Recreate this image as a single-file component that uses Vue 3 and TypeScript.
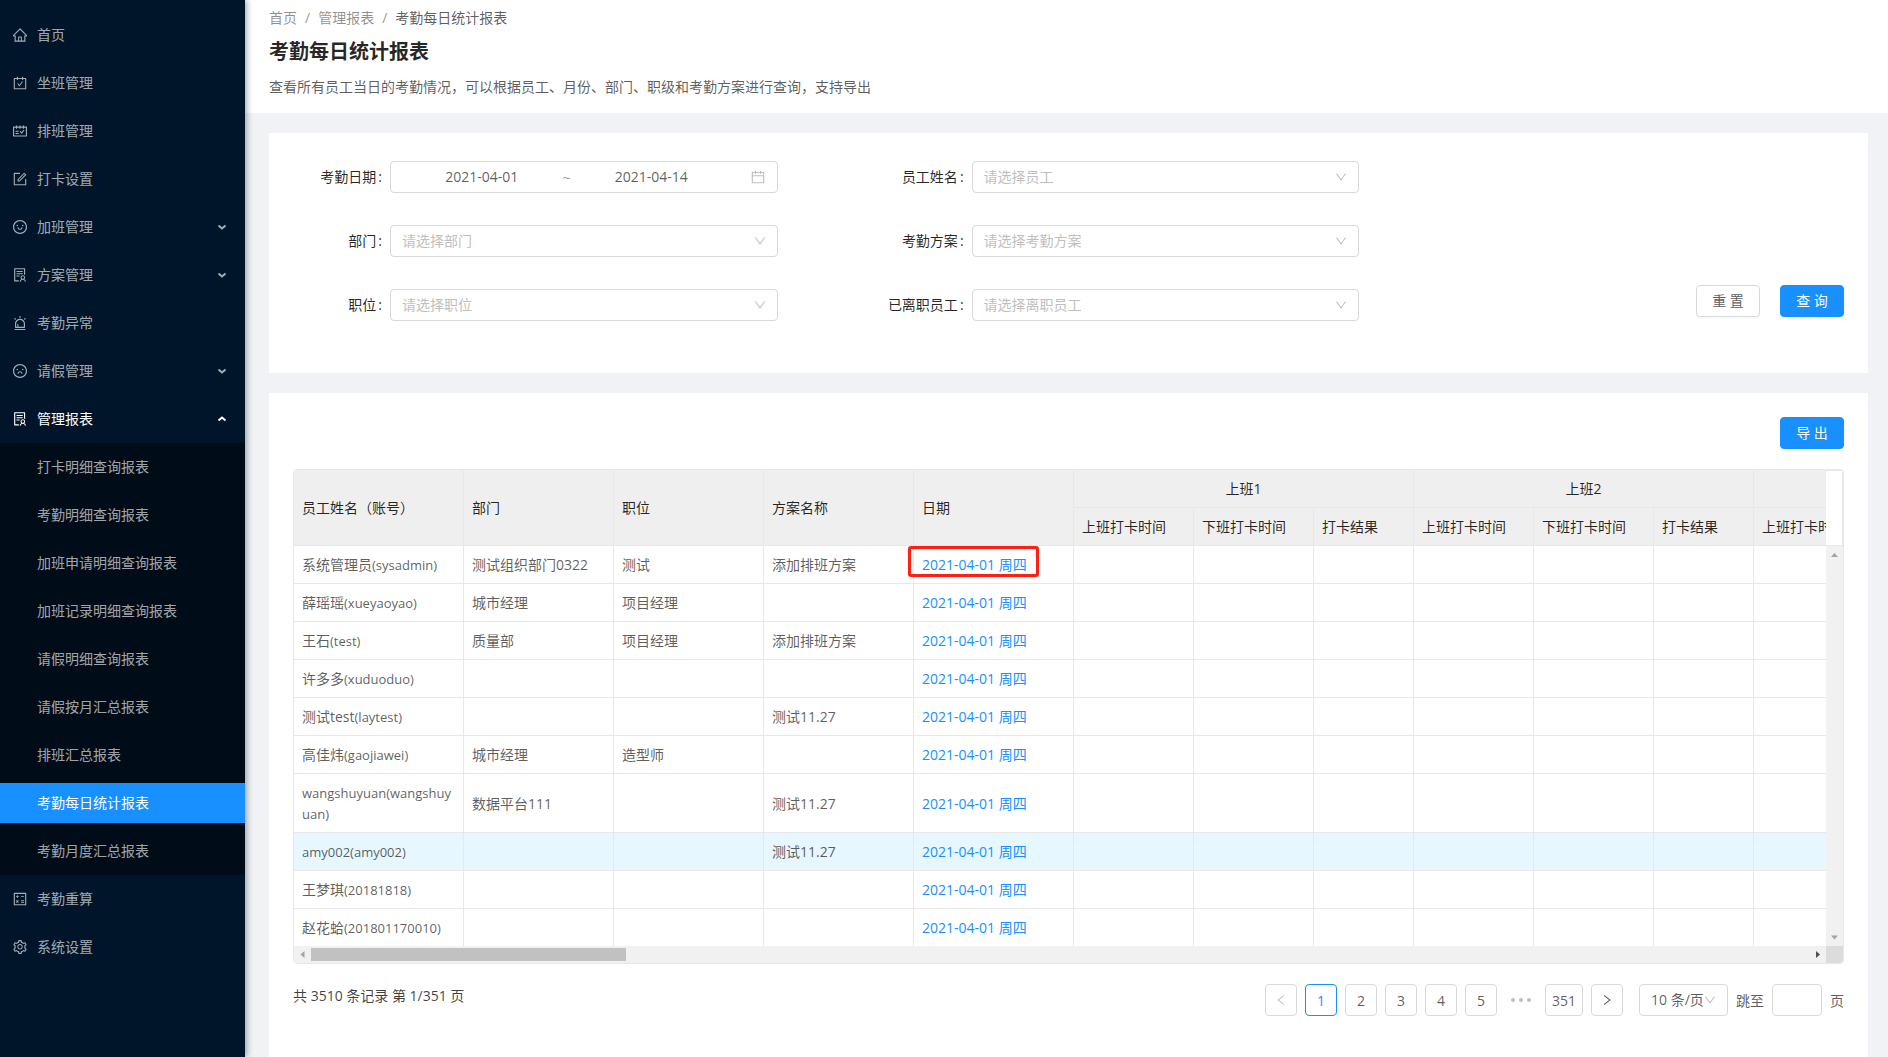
<script setup lang="ts">
import { ref } from 'vue'

interface MenuItem {
  label: string
  icon: string
  expandable?: boolean
  open?: boolean
  children?: string[]
}

interface Row {
  name: string
  account: string
  dept?: string
  post?: string
  plan?: string
  marked?: boolean
  hovered?: boolean
}

const icons: Record<string, string> = {
  home: 'M946.5 505L560.1 118.8l-25.9-25.9a31.5 31.5 0 0 0-44.4 0L77.5 505a63.9 63.9 0 0 0-18.8 46c.4 35.2 29.7 63.3 64.9 63.3h42.5V940h691.8V614.3h43.4c17.1 0 33.2-6.7 45.3-18.8a63.6 63.6 0 0 0 18.7-45.3c0-17-6.7-33.1-18.8-45.2zM568 868H456V664h112v204zm217.9-325.7V868H632V640c0-22.1-17.9-40-40-40H432c-22.1 0-40 17.9-40 40v228H238.1V542.3h-96l370-369.7 23.1 23.1L882 542.3h-96.1z',
  carryOut: 'M880 184H712v-64c0-4.4-3.6-8-8-8h-56c-4.4 0-8 3.6-8 8v64H384v-64c0-4.4-3.6-8-8-8h-56c-4.4 0-8 3.6-8 8v64H144c-17.7 0-32 14.3-32 32v664c0 17.7 14.3 32 32 32h736c17.7 0 32-14.3 32-32V216c0-17.7-14.3-32-32-32zm-40 656H184V256h128v48c0 4.4 3.6 8 8 8h56c4.4 0 8-3.6 8-8v-48h256v48c0 4.4 3.6 8 8 8h56c4.4 0 8-3.6 8-8v-48h128v584zM688 420h-55.2c-5.1 0-10 2.5-13 6.6L468.9 634.4l-64.7-89c-3-4.1-7.8-6.6-13-6.6H336c-6.5 0-10.3 7.4-6.5 12.7l126.4 174a16.1 16.1 0 0 0 26 0l212.6-292.7c3.8-5.4 0-12.8-6.5-12.8z',
  schedule: 'M928 224H768v-56c0-4.4-3.6-8-8-8h-56c-4.4 0-8 3.6-8 8v56H548v-56c0-4.4-3.6-8-8-8h-56c-4.4 0-8 3.6-8 8v56H328v-56c0-4.4-3.6-8-8-8h-56c-4.4 0-8 3.6-8 8v56H96c-17.7 0-32 14.3-32 32v576c0 17.7 14.3 32 32 32h832c17.7 0 32-14.3 32-32V256c0-17.7-14.3-32-32-32zm-40 568H136V296h120v56c0 4.4 3.6 8 8 8h56c4.4 0 8-3.6 8-8v-56h148v56c0 4.4 3.6 8 8 8h56c4.4 0 8-3.6 8-8v-56h148v56c0 4.4 3.6 8 8 8h56c4.4 0 8-3.6 8-8v-56h120v496zM416 496H232c-4.4 0-8 3.6-8 8v48c0 4.4 3.6 8 8 8h184c4.4 0 8-3.6 8-8v-48c0-4.4-3.6-8-8-8zm0 136H232c-4.4 0-8 3.6-8 8v48c0 4.4 3.6 8 8 8h184c4.4 0 8-3.6 8-8v-48c0-4.4-3.6-8-8-8zm308.2-177.4L620.6 598.3l-52.8-73.1c-3-4.2-7.8-6.6-12.9-6.6H500c-6.5 0-10.3 7.4-6.5 12.7l114.1 158.2a15.9 15.9 0 0 0 25.8 0l165-228.7c3.8-5.3 0-12.7-6.5-12.7H737c-5-.1-9.8 2.4-12.8 6.5z',
  form: 'M904 512h-56c-4.4 0-8 3.6-8 8v320H184V184h320c4.4 0 8-3.6 8-8v-56c0-4.4-3.6-8-8-8H144c-17.7 0-32 14.3-32 32v736c0 17.7 14.3 32 32 32h736c17.7 0 32-14.3 32-32V520c0-4.4-3.6-8-8-8zM355.9 534.9L354 653.8c-.1 8.9 7.1 16.2 16 16.2h.4l118-2.9c2-.1 4-.9 5.4-2.3l415.9-415c3.1-3.1 3.1-8.2 0-11.3L785.4 114.3c-1.6-1.6-3.6-2.3-5.7-2.3s-4.1.8-5.7 2.3l-415.8 415a8.3 8.3 0 0 0-2.3 5.6zm63.5 23.6L779.7 199l45.2 45.1-360.5 359.7-45.7 1.1.7-46.4z',
  smile: 'M288 421a48 48 0 1 0 96 0 48 48 0 1 0-96 0zm352 0a48 48 0 1 0 96 0 48 48 0 1 0-96 0zM512 64C264.6 64 64 264.6 64 512s200.6 448 448 448 448-200.6 448-448S759.4 64 512 64zm263 711c-34.2 34.2-74 61-118.3 79.8C611 874.2 562.3 884 512 884c-50.3 0-99-9.8-144.8-29.2A370.4 370.4 0 0 1 248.9 775c-34.2-34.2-61-74-79.8-118.3C149.8 611 140 562.3 140 512s9.8-99 29.2-144.8A370.4 370.4 0 0 1 249 248.9c34.2-34.2 74-61 118.3-79.8C413 149.8 461.7 140 512 140c50.3 0 99 9.8 144.8 29.2A370.4 370.4 0 0 1 775.1 249c34.2 34.2 61 74 79.8 118.3C874.2 413 884 461.7 884 512s-9.8 99-29.2 144.8A368.89 368.89 0 0 1 775 775zM664 533h-48.1c-4.2 0-7.8 3.2-8.1 7.4C604 589.9 562.5 629 512 629s-92.1-39.1-95.8-88.6c-.3-4.2-3.9-7.4-8.1-7.4H360a8 8 0 0 0-8 8.4c4.4 84.3 74.5 151.6 160 151.6s155.6-67.3 160-151.6a8 8 0 0 0-8-8.4z',
  frown: 'M288 421a48 48 0 1 0 96 0 48 48 0 1 0-96 0zm352 0a48 48 0 1 0 96 0 48 48 0 1 0-96 0zM512 64C264.6 64 64 264.6 64 512s200.6 448 448 448 448-200.6 448-448S759.4 64 512 64zm263 711c-34.2 34.2-74 61-118.3 79.8C611 874.2 562.3 884 512 884c-50.3 0-99-9.8-144.8-29.2A370.4 370.4 0 0 1 248.9 775c-34.2-34.2-61-74-79.8-118.3C149.8 611 140 562.3 140 512s9.8-99 29.2-144.8A370.4 370.4 0 0 1 249 248.9c34.2-34.2 74-61 118.3-79.8C413 149.8 461.7 140 512 140c50.3 0 99 9.8 144.8 29.2A370.4 370.4 0 0 1 775.1 249c34.2 34.2 61 74 79.8 118.3C874.2 413 884 461.7 884 512s-9.8 99-29.2 144.8A368.89 368.89 0 0 1 775 775zM512 533c-85.5 0-155.6 67.3-160 151.6a8 8 0 0 0 8 8.4h48.1c4.2 0 7.8-3.2 8.1-7.4C420 636.1 461.5 597 512 597s92.1 39.1 95.8 88.6c.3 4.2 3.9 7.4 8.1 7.4H664a8 8 0 0 0 8-8.4C667.6 600.3 597.5 533 512 533z',
  solution: 'M688 264c0-4.4-3.6-8-8-8H296c-4.4 0-8 3.6-8 8v48c0 4.4 3.6 8 8 8h384c4.4 0 8-3.6 8-8v-48zm-8 136H296c-4.4 0-8 3.6-8 8v48c0 4.4 3.6 8 8 8h384c4.4 0 8-3.6 8-8v-48c0-4.4-3.6-8-8-8zM480 544H296c-4.4 0-8 3.6-8 8v48c0 4.4 3.6 8 8 8h184c4.4 0 8-3.6 8-8v-48c0-4.4-3.6-8-8-8zm-48 308H208V148h560v344c0 4.4 3.6 8 8 8h56c4.4 0 8-3.6 8-8V108c0-17.7-14.3-32-32-32H168c-17.7 0-32 14.3-32 32v784c0 17.7 14.3 32 32 32h264c4.4 0 8-3.6 8-8v-56c0-4.4-3.6-8-8-8zm356.8-74.4c29-26.3 47.2-64.3 47.2-106.6 0-79.5-64.5-144-144-144s-144 64.5-144 144c0 42.3 18.2 80.3 47.2 106.6-57 32.5-96.2 92.7-99.2 162.1-.2 4.5 3.5 8.3 8 8.3h48.1c4.2 0 7.7-3.3 8-7.6C564 871.2 621.7 816 692 816s128 55.2 131.9 124.4c.2 4.2 3.7 7.6 8 7.6H880c4.6 0 8.2-3.8 8-8.3-2.9-69.5-42.2-129.6-99.2-162.1zM692 591c44.2 0 80 35.8 80 80s-35.8 80-80 80-80-35.8-80-80 35.8-80 80-80z',
  alert: 'M193 796c0 17.7 14.3 32 32 32h574c17.7 0 32-14.3 32-32V563c0-176.2-142.8-319-319-319S193 386.8 193 563v233zm72-233c0-136.4 110.6-247 247-247s247 110.6 247 247v193H404V585c0-5.5-4.5-10-10-10h-44c-5.5 0-10 4.5-10 10v171h-75V563zm-48.1-252.5l39.6-39.6c3.1-3.1 3.1-8.2 0-11.3l-67.9-67.9a8.03 8.03 0 0 0-11.3 0l-39.6 39.6a8.03 8.03 0 0 0 0 11.3l67.9 67.9c3.1 3.1 8.1 3.1 11.3 0zm669.6-79.2l-39.6-39.6a8.03 8.03 0 0 0-11.3 0l-67.9 67.9a8.03 8.03 0 0 0 0 11.3l39.6 39.6c3.1 3.1 8.2 3.1 11.3 0l67.9-67.9c3.1-3.2 3.1-8.2 0-11.3zM832 892H192c-17.7 0-32 14.3-32 32v24c0 4.4 3.6 8 8 8h688c4.4 0 8-3.6 8-8v-24c0-17.7-14.3-32-32-32zM484 180h56c4.4 0 8-3.6 8-8V76c0-4.4-3.6-8-8-8h-56c-4.4 0-8 3.6-8 8v96c0 4.4 3.6 8 8 8z',
  calculator: 'M880 112H144c-17.7 0-32 14.3-32 32v736c0 17.7 14.3 32 32 32h736c17.7 0 32-14.3 32-32V144c0-17.7-14.3-32-32-32zm-40 728H184V184h656v656zM251 331h64v-64h56v64h64v56h-64v64h-56v-64h-64zM576 331h192v56H576zM576 592h192v56H576zM576 696h192v56H576zM254 622l40-40 49 49 49-49 40 40-49 49 49 49-40 40-49-49-49 49-40-40 49-49z',
  setting: 'M924.8 625.7l-65.5-56c3.1-19 4.7-38.4 4.7-57.8s-1.6-38.8-4.7-57.8l65.5-56a32.03 32.03 0 0 0 9.3-35.2l-.9-2.6a443.74 443.74 0 0 0-79.7-137.9l-1.8-2.1a32.12 32.12 0 0 0-35.1-9.5l-81.3 28.9c-30-24.6-63.5-44-99.7-57.6l-15.7-85a32.05 32.05 0 0 0-25.8-25.7l-2.7-.5c-52.1-9.4-106.9-9.4-159 0l-2.7.5a32.05 32.05 0 0 0-25.8 25.7l-15.8 85.4a351.86 351.86 0 0 0-99 57.4l-81.9-29.1a32 32 0 0 0-35.1 9.5l-1.8 2.1a446.02 446.02 0 0 0-79.7 137.9l-.9 2.6c-4.5 12.5-.8 26.5 9.3 35.2l66.3 56.6c-3.1 18.8-4.6 38-4.6 57.1 0 19.2 1.5 38.4 4.6 57.1L99 625.5a32.03 32.03 0 0 0-9.3 35.2l.9 2.6c18.1 50.4 44.9 96.9 79.7 137.9l1.8 2.1a32.12 32.12 0 0 0 35.1 9.5l81.9-29.1c29.8 24.5 63.1 43.9 99 57.4l15.8 85.4a32.05 32.05 0 0 0 25.8 25.7l2.7.5a449.4 449.4 0 0 0 159 0l2.7-.5a32.05 32.05 0 0 0 25.8-25.7l15.7-85a350 350 0 0 0 99.7-57.6l81.3 28.9a32 32 0 0 0 35.1-9.5l1.8-2.1c34.8-41.1 61.6-87.5 79.7-137.9l.9-2.6c4.5-12.3.8-26.3-9.3-35zM788.3 465.9c2.5 15.1 3.8 30.6 3.8 46.1s-1.3 31-3.8 46.1l-6.6 40.1 74.7 63.9a370.03 370.03 0 0 1-42.6 73.6L721 702.8l-31.4 25.8c-23.9 19.6-50.5 35-79.3 45.8l-38.1 14.3-17.9 97a377.5 377.5 0 0 1-85 0l-17.9-97.2-37.8-14.5c-28.5-10.8-55-26.2-78.7-45.7l-31.4-25.9-93.4 33.2c-17-22.9-31.2-47.6-42.6-73.6l75.5-64.5-6.5-40c-2.4-14.9-3.7-30.3-3.7-45.5 0-15.3 1.2-30.6 3.7-45.5l6.5-40-75.5-64.5c11.3-26.1 25.6-50.7 42.6-73.6l93.4 33.2 31.4-25.9c23.7-19.5 50.2-34.9 78.7-45.7l37.9-14.3 17.9-97.2c28.1-3.2 56.8-3.2 85 0l17.9 97 38.1 14.3c28.7 10.8 55.4 26.2 79.3 45.8l31.4 25.8 92.8-32.9c17 22.9 31.2 47.6 42.6 73.6L781.8 426l6.5 39.9zM512 326c-97.2 0-176 78.8-176 176s78.8 176 176 176 176-78.8 176-176-78.8-176-176-176zm79.2 255.2A111.6 111.6 0 0 1 512 614c-29.9 0-58-11.7-79.2-32.8A111.6 111.6 0 0 1 400 502c0-29.9 11.7-58 32.8-79.2C454 401.6 482.1 390 512 390c29.9 0 58 11.6 79.2 32.8A111.6 111.6 0 0 1 624 502c0 29.9-11.7 58-32.8 79.2z',
  calendar: 'M880 184H712v-64c0-4.4-3.6-8-8-8h-56c-4.4 0-8 3.6-8 8v64H384v-64c0-4.4-3.6-8-8-8h-56c-4.4 0-8 3.6-8 8v64H144c-17.7 0-32 14.3-32 32v664c0 17.7 14.3 32 32 32h736c17.7 0 32-14.3 32-32V216c0-17.7-14.3-32-32-32zm-40 656H184V460h656v380zM184 392V256h128v48c0 4.4 3.6 8 8 8h56c4.4 0 8-3.6 8-8v-48h256v48c0 4.4 3.6 8 8 8h56c4.4 0 8-3.6 8-8v-48h128v136H184z',
  down: 'M884 256h-75c-5.1 0-9.9 2.5-12.9 6.6L512 654.2 227.9 262.6c-3-4.1-7.8-6.6-12.9-6.6h-75c-6.5 0-10.3 7.4-6.5 12.7l352.6 486.1c12.8 17.6 39 17.6 51.7 0l352.6-486.1c3.9-5.3.1-12.7-6.4-12.7z',
  left: 'M724 218.3V141c0-6.7-7.7-10.4-12.9-6.3L260.3 486.8a31.86 31.86 0 0 0 0 50.3l450.8 352.1c5.3 4.1 12.9.4 12.9-6.3v-77.3c0-4.9-2.3-9.6-6.1-12.6l-360-281 360-281.1c3.8-3 6.1-7.7 6.1-12.6z',
  right: 'M765.7 486.8L314.9 134.7A7.97 7.97 0 0 0 302 141v77.3c0 4.9 2.3 9.6 6.1 12.6l360 281.1-360 281.1c-3.9 3-6.1 7.7-6.1 12.6V883c0 6.7 7.7 10.4 12.9 6.3l450.8-352.1a31.96 31.96 0 0 0 0-50.4z',
}

const menu: MenuItem[] = [
  { label: '首页', icon: 'home' },
  { label: '坐班管理', icon: 'carryOut' },
  { label: '排班管理', icon: 'schedule' },
  { label: '打卡设置', icon: 'form' },
  { label: '加班管理', icon: 'smile', expandable: true },
  { label: '方案管理', icon: 'solution', expandable: true },
  { label: '考勤异常', icon: 'alert' },
  { label: '请假管理', icon: 'frown', expandable: true },
  {
    label: '管理报表',
    icon: 'solution',
    expandable: true,
    open: true,
    children: [
      '打卡明细查询报表',
      '考勤明细查询报表',
      '加班申请明细查询报表',
      '加班记录明细查询报表',
      '请假明细查询报表',
      '请假按月汇总报表',
      '排班汇总报表',
      '考勤每日统计报表',
      '考勤月度汇总报表',
    ],
  },
  { label: '考勤重算', icon: 'calculator' },
  { label: '系统设置', icon: 'setting' },
]
const current = '考勤每日统计报表'

const startDate = ref('2021-04-01')
const endDate = ref('2021-04-14')
const filters = [
  { id: 'employee', label: '员工姓名', hint: '请选择员工' },
  { id: 'dept', label: '部门', hint: '请选择部门' },
  { id: 'plan', label: '考勤方案', hint: '请选择考勤方案' },
  { id: 'post', label: '职位', hint: '请选择职位' },
  { id: 'resigned', label: '已离职员工', hint: '请选择离职员工' },
]

const columnWidths = [170, 150, 150, 150, 160, 120, 120, 100, 120, 120, 100, 120]
const fixedHeads = ['员工姓名（账号）', '部门', '职位', '方案名称', '日期']
const shiftHeads = [
  '上班打卡时间', '下班打卡时间', '打卡结果',
  '上班打卡时间', '下班打卡时间', '打卡结果',
  '上班打卡时间',
]

const day = '2021-04-01 周四'
const rows: Row[] = [
  { name: '系统管理员', account: 'sysadmin', dept: '测试组织部门0322', post: '测试', plan: '添加排班方案', marked: true },
  { name: '薛瑶瑶', account: 'xueyaoyao', dept: '城市经理', post: '项目经理' },
  { name: '王石', account: 'test', dept: '质量部', post: '项目经理', plan: '添加排班方案' },
  { name: '许多多', account: 'xuduoduo' },
  { name: '测试test', account: 'laytest', plan: '测试11.27' },
  { name: '高佳炜', account: 'gaojiawei', dept: '城市经理', post: '造型师' },
  { name: '', account: 'wangshuyuan', dept: '数据平台111', plan: '测试11.27' },
  { name: '', account: 'amy002', plan: '测试11.27', hovered: true },
  { name: '王梦琪', account: '20181818' },
  { name: '赵花蛤', account: '201801170010' },
]
const latinPart = (row: Row): string => (row.name ? `(${row.account})` : `${row.account}(${row.account})`)

const pages = [1, 2, 3, 4, 5]
const page = ref(1)
const jump = ref('')
</script>

<template>
  <div class="layout">
    <nav class="sider">
      <ul class="menu">
        <li v-for="item in menu" :key="item.label">
          <div class="slot">
            <button v-if="item.expandable" type="button" class="entry" :class="{ open: item.open }">
              <svg class="icon" viewBox="64 64 896 896"><path :d="icons[item.icon]" /></svg>
              <span class="entry-label">{{ item.label }}</span>
              <svg class="arrow" viewBox="0 0 10 8">
                <path :d="item.open ? 'M1.5 5.5L5 2.5L8.5 5.5' : 'M1.5 2.5L5 5.5L8.5 2.5'" />
              </svg>
            </button>
            <a v-else href="#" class="entry">
              <svg class="icon" viewBox="64 64 896 896"><path :d="icons[item.icon]" /></svg>
              <span class="entry-label">{{ item.label }}</span>
            </a>
          </div>
          <ul v-if="item.children" class="submenu">
            <li v-for="child in item.children" :key="child" class="slot">
              <a href="#" class="entry sub" :class="{ selected: child === current }">{{ child }}</a>
            </li>
          </ul>
        </li>
      </ul>
    </nav>

    <main class="main">
      <header class="page-head">
        <div class="crumbs">
          <a href="#">首页</a><span class="sep">/</span><a href="#">管理报表</a><span class="sep">/</span><span class="here">考勤每日统计报表</span>
        </div>
        <h1>考勤每日统计报表</h1>
        <p>查看所有员工当日的考勤情况，可以根据员工、月份、部门、职级和考勤方案进行查询，支持导出</p>
      </header>

      <div class="content">
        <form class="card filters" @submit.prevent>
          <div class="fields">
            <div class="field">
              <label for="start">考勤日期</label>
              <div class="control range">
                <input id="start" v-model="startDate" type="text" />
                <span class="tilde">~</span>
                <input v-model="endDate" type="text" aria-label="结束日期" />
                <svg class="icon cal" viewBox="64 64 896 896"><path :d="icons.calendar" /></svg>
              </div>
            </div>
            <div v-for="f in filters" :key="f.id" class="field">
              <label :for="f.id">{{ f.label }}</label>
              <div class="control">
                <select :id="f.id">
                  <option value="">{{ f.hint }}</option>
                </select>
                <svg class="caret" viewBox="64 64 896 896"><path :d="icons.down" /></svg>
              </div>
            </div>
          </div>
          <div class="actions">
            <button type="reset" class="btn">重 置</button>
            <button type="submit" class="btn primary">查 询</button>
          </div>
        </form>

        <section class="card report">
          <div class="toolbar">
            <button type="button" class="btn primary">导 出</button>
          </div>

          <div class="frame">
            <div class="viewport">
              <table>
                <colgroup>
                  <col v-for="(w, i) in columnWidths" :key="i" :style="{ width: w + 'px' }" />
                </colgroup>
                <thead>
                  <tr>
                    <th v-for="h in fixedHeads" :key="h" rowspan="2">{{ h }}</th>
                    <th colspan="3" class="group">上班1</th>
                    <th colspan="3" class="group">上班2</th>
                    <th class="group"></th>
                  </tr>
                  <tr>
                    <th v-for="(h, i) in shiftHeads" :key="i">{{ h }}</th>
                  </tr>
                </thead>
                <tbody>
                  <tr v-for="row in rows" :key="row.account" :class="{ hovered: row.hovered }">
                    <td>{{ row.name }}<span class="account">{{ latinPart(row) }}</span></td>
                    <td>{{ row.dept }}</td>
                    <td>{{ row.post }}</td>
                    <td>{{ row.plan }}</td>
                    <td class="date">
                      <a href="#">{{ day }}</a>
                      <span v-if="row.marked" class="mark"></span>
                    </td>
                    <td v-for="n in 7" :key="n"></td>
                  </tr>
                </tbody>
              </table>
            </div>
            <div class="side">
              <div class="side-head"></div>
              <div class="vtrack">
                <svg viewBox="0 0 17 17"><path d="M8.5 7L12 11H5z" /></svg>
                <svg viewBox="0 0 17 17"><path d="M5 6.500h7L8.500 10.500z" /></svg>
              </div>
            </div>
            <div class="htrack">
              <svg viewBox="0 0 17 17"><path d="M10.500 5v7L6.500 8.500z" /></svg>
              <div class="hrail"><div class="thumb"></div></div>
              <svg class="strong" viewBox="0 0 17 17"><path d="M7 5v7L11 8.500z" /></svg>
            </div>
            <div class="corner"></div>
          </div>

          <div class="footer">
            <div class="total">共 3510 条记录 第 1/351 页</div>
            <div class="pager">
              <button type="button" class="page" disabled aria-label="上一页">
                <svg viewBox="64 64 896 896"><path :d="icons.left" /></svg>
              </button>
              <button
                v-for="n in pages"
                :key="n"
                type="button"
                class="page"
                :class="{ active: n === page }"
                @click="page = n"
              >{{ n }}</button>
              <span class="dots"><i></i><i></i><i></i></span>
              <button type="button" class="page" @click="page = 351">351</button>
              <button type="button" class="page" aria-label="下一页">
                <svg viewBox="64 64 896 896"><path :d="icons.right" /></svg>
              </button>
              <div class="control size">
                <select aria-label="每页条数">
                  <option>10 条/页</option>
                </select>
                <svg class="caret" viewBox="64 64 896 896"><path :d="icons.down" /></svg>
              </div>
              <label for="jump">跳至</label>
              <input id="jump" v-model="jump" class="jump" type="text" />
              <span>页</span>
            </div>
          </div>
        </section>
      </div>
    </main>
  </div>
</template>

<style>
body {
  margin: 0;
}
</style>

<style scoped>
.layout,
.layout * {
  box-sizing: border-box;
}

.layout {
  display: flex;
  min-height: 100vh;
  background: #f0f2f5;
  color: rgba(0, 0, 0, 0.65);
  font-family: 'Open Sans', 'Noto Sans CJK SC', sans-serif;
  font-size: 14px;
  line-height: 21px;
}

button,
input,
select {
  margin: 0;
  font: inherit;
  color: inherit;
  outline: none;
}

a {
  color: inherit;
  text-decoration: none;
}

svg {
  display: block;
  flex: none;
  fill: currentColor;
}

/* Side menu */
.sider {
  position: relative;
  z-index: 1;
  flex: none;
  width: 245px;
  background: #001529;
  box-shadow: 2px 0 6px rgba(0, 21, 41, 0.35);
  color: rgba(255, 255, 255, 0.65);
}

.menu,
.submenu {
  margin: 0;
  padding: 0;
  list-style: none;
}

.menu {
  padding-top: 11px;
}

.submenu {
  background: #000c17;
}

.slot {
  padding: 4px 0;
}

.entry {
  display: flex;
  align-items: center;
  width: 100%;
  height: 40px;
  padding: 0 18px 0 13px;
  border: 0;
  background: none;
  text-align: left;
  cursor: pointer;
}

.entry.sub {
  padding-bottom: 2px;
  padding-left: 37px;
}

.entry.open,
.entry.selected {
  color: #fff;
}

.entry.selected {
  background: #1890ff;
}

.icon {
  width: 14px;
  height: 14px;
}

.entry-label {
  flex: 1;
  margin-left: 10px;
  padding-bottom: 2px;
}

.arrow {
  width: 10px;
  height: 8px;
  fill: none;
  stroke: currentColor;
  stroke-width: 2;
}

/* Page header */
.main {
  display: flex;
  flex: 1;
  flex-direction: column;
  min-width: 0;
}

.page-head {
  height: 113px;
  padding: 7px 24px 0;
  background: #fff;
}

.crumbs {
  color: rgba(0, 0, 0, 0.45);
}

.sep {
  margin: 0 8px;
}

.here {
  color: rgba(0, 0, 0, 0.65);
}

h1 {
  margin: 8px 0;
  color: rgba(0, 0, 0, 0.85);
  font-size: 20px;
  font-weight: 700;
  line-height: 32px;
}

p {
  margin: 0;
}

.content {
  display: flex;
  flex: 1;
  flex-direction: column;
  gap: 20px;
  padding: 20px 20px 0 24px;
}

.card {
  padding: 24px;
  background: #fff;
}

/* Filter form */
.filters {
  display: grid;
  grid-template-columns: minmax(0, 18fr) minmax(0, 6fr);
}

.fields {
  display: grid;
  grid-template-columns: repeat(2, minmax(0, 1fr));
}

.field {
  display: grid;
  grid-template-columns: minmax(0, 4fr) minmax(0, 16fr) minmax(0, 4fr);
  align-items: center;
  height: 40px;
  margin-bottom: 24px;
}

.field label {
  padding-bottom: 2px;
  color: rgba(0, 0, 0, 0.85);
  text-align: right;
  white-space: nowrap;
}

.field label::after {
  content: ':';
  margin: 0 8px 0 2px;
}

.control {
  position: relative;
}

.range {
  display: flex;
  align-items: center;
  height: 32px;
  padding: 0 12px 0 11px;
  border: 1px solid #d9d9d9;
  border-radius: 4px;
}

.range input {
  width: 44%;
  min-width: 0;
  padding: 0 0 2px;
  border: 0;
  background: none;
  text-align: center;
}

.tilde {
  width: 10px;
  color: rgba(0, 0, 0, 0.45);
  text-align: center;
}

.cal {
  margin-left: auto;
  color: rgba(0, 0, 0, 0.25);
}

select {
  display: block;
  width: 100%;
  height: 32px;
  padding: 0 30px 2px 11px;
  border: 1px solid #d9d9d9;
  border-radius: 4px;
  background: #fff;
  color: #bfbfbf;
  appearance: none;
}

.caret {
  position: absolute;
  top: 10px;
  right: 12px;
  width: 12px;
  height: 12px;
  color: rgba(0, 0, 0, 0.25);
  pointer-events: none;
}

.actions {
  display: flex;
  align-items: flex-end;
  justify-content: flex-end;
  gap: 20px;
  padding-bottom: 32px;
}

.btn {
  width: 64px;
  height: 32px;
  padding: 0 0 2px;
  border: 1px solid #d9d9d9;
  border-radius: 4px;
  background: #fff;
  box-shadow: 0 2px 0 rgba(0, 0, 0, 0.02);
  text-align: center;
  cursor: pointer;
}

.btn.primary {
  border-color: #1890ff;
  background: #1890ff;
  color: #fff;
}

.actions .btn {
  flex: none;
}

/* Report table */
.report {
  flex: 1;
}

.toolbar {
  display: flex;
  justify-content: flex-end;
  margin-bottom: 20px;
}

.frame {
  display: grid;
  grid-template-columns: minmax(0, 1fr) 17px;
  overflow: hidden;
  border: 1px solid #e8e8e8;
  border-radius: 4px;
}

.viewport {
  overflow: hidden;
}

table {
  width: 1580px;
  border-collapse: separate;
  border-spacing: 0;
  table-layout: fixed;
}

th,
td {
  padding: 8px;
  border-right: 1px solid #e8e8e8;
  border-bottom: 1px solid #e8e8e8;
  text-align: left;
  overflow-wrap: break-word;
}

th {
  height: 38px;
  background: #efefef;
  color: rgba(0, 0, 0, 0.85);
  font-weight: 400;
  white-space: nowrap;
}

th.group {
  text-align: center;
}

tbody tr:last-child td {
  border-bottom: 0;
}

.hovered td {
  background: #e6f7ff;
}

/* The shorter line box keeps the small text from stretching the row */
.account {
  font-size: 13px;
  line-height: 16px;
}

.date {
  position: relative;
  color: #1890ff;
}

.mark {
  position: absolute;
  top: 0;
  left: -6px;
  width: 131px;
  height: 31px;
  border: 3px solid #ff1f14;
  border-radius: 3px;
  pointer-events: none;
}

.side {
  display: flex;
  flex-direction: column;
}

.side-head {
  height: 76px;
  border: 1px solid #e8e8e8;
  border-left: 0;
}

.vtrack {
  display: flex;
  flex: 1;
  flex-direction: column;
  justify-content: space-between;
  background: #f1f1f1;
  color: #a3a3a3;
}

.vtrack svg,
.htrack svg {
  width: 17px;
  height: 17px;
}

.htrack {
  display: flex;
  align-items: center;
  background: #f1f1f1;
  color: #a3a3a3;
}

.htrack .strong {
  color: #505050;
}

.hrail {
  flex: 1;
}

.thumb {
  width: 21%;
  height: 13px;
  background: #c1c1c1;
}

.corner {
  background: #dcdcdc;
}

/* Footer */
.footer {
  display: flex;
  align-items: flex-start;
  justify-content: space-between;
  margin-top: 20px;
}

.total {
  color: rgba(0, 0, 0, 0.75);
  line-height: 24px;
}

.pager {
  display: flex;
  align-items: center;
  gap: 8px;
}

.page {
  display: flex;
  align-items: center;
  justify-content: center;
  min-width: 32px;
  height: 32px;
  padding: 0 6px;
  border: 1px solid #d9d9d9;
  border-radius: 4px;
  background: #fff;
  cursor: pointer;
}

.page svg {
  width: 12px;
  height: 12px;
}

.page:disabled {
  color: rgba(0, 0, 0, 0.25);
}

.page.active {
  border-color: #1890ff;
  color: #1890ff;
}

.dots {
  display: flex;
  align-items: center;
  justify-content: center;
  gap: 4px;
  width: 32px;
}

.dots i {
  width: 4px;
  height: 4px;
  border-radius: 50%;
  background: rgba(0, 0, 0, 0.25);
}

.size {
  width: 89px;
  margin-left: 8px;
}

.size select {
  padding-right: 11px;
  color: rgba(0, 0, 0, 0.65);
}

.jump {
  width: 50px;
  height: 32px;
  padding: 0 11px;
  border: 1px solid #d9d9d9;
  border-radius: 4px;
}
</style>
